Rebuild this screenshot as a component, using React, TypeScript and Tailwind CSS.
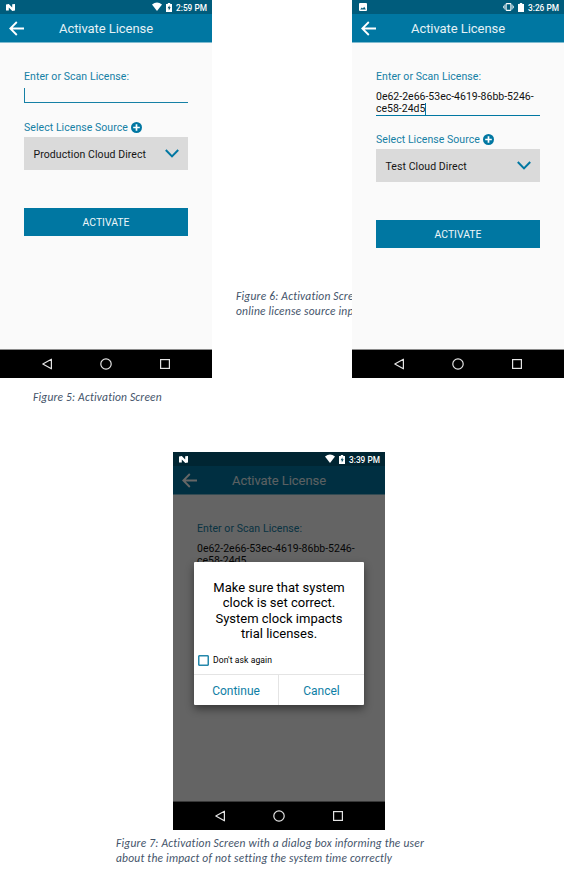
import React from "react";

type Kind = "charging" | "vibrate";

function Wifi() {
  return (
    <svg className="h-[10px] w-[10px]" viewBox="0 0 10 10">
      <path d="M0 2.4Q5-1.4 10 2.4L5 9Z" fill="#fff" />
    </svg>
  );
}

function Battery({ charging }: { charging?: boolean }) {
  return (
    <svg className="h-[9px] w-[6px]" viewBox="0 0 6 9">
      <path d="M0 1h1.8V0h2.4v1H6v8H0Z" fill="#fff" />
      {charging && <path d="M3.5 2.2 1.6 5.2h1.2v2.3l1.9-3.2H3.5Z" fill="#00495f" />}
    </svg>
  );
}

function StatusBar({ kind, time, dark }: { kind: Kind; time: string; dark?: boolean }) {
  return (
    <div className={`flex h-[14px] items-center pr-[5px] pl-[6px] text-white ${dark ? "bg-[#002532]" : "bg-[#005c7c]"}`}>
      {kind === "charging" ? (
        <svg className="h-[7px] w-[9px]" viewBox="0 0 9 7">
          <path d="M0 .5 2.8 0 6.2 3.6V.3L9 0v6.5L6.3 7 2.8 3.4v3.2H0Z" fill="#fff" />
        </svg>
      ) : (
        <svg className="ml-px h-[8px] w-[8px]" viewBox="0 0 8 8">
          <rect width="8" height="8" rx="1" fill="#fff" />
          <path d="m1.2 6.4 1.6-2 1.1 1.2 1.3-1.9 1.7 2.7Z" fill="#005c7c" />
        </svg>
      )}
      <div className="ml-auto flex items-center">
        {kind === "charging" ? (
          <>
            <Wifi />
            <span className="w-[4px]" />
            <Battery charging />
          </>
        ) : (
          <>
            <svg className="h-[8px] w-[11px]" viewBox="0 0 11 8" fill="none" stroke="#fff">
              <rect x="3.1" y=".6" width="4.8" height="6.8" rx=".6" strokeWidth="1.1" />
              <path d="M1.8 1.6v4.8M9.2 1.6v4.8M.4 2.8v2.4M10.6 2.8v2.4" strokeWidth=".8" />
            </svg>
            <span className="w-[4px]" />
            <Battery />
          </>
        )}
        <span className="ml-[4px] w-[31px] pt-px text-[8.3px] leading-[14px] font-medium whitespace-nowrap">{time}</span>
      </div>
    </div>
  );
}

function NavBar() {
  return (
    <div className="flex h-[29px] items-center justify-center border-t border-[#8c8c8c] bg-black">
      <svg className="h-[28px] w-[212px]" viewBox="0 0 212 28" fill="none" stroke="#e4e4e4" strokeWidth="1.2">
        <path d="M51.4 9.2v9.6L42.8 14Z" strokeLinejoin="round" />
        <circle cx="106" cy="14" r="5.2" />
        <rect x="160.6" y="9.6" width="8.8" height="8.8" />
      </svg>
    </div>
  );
}

interface PhoneProps {
  kind: Kind;
  time: string;
  license?: string[];
  source?: string;
  caret?: boolean;
  children?: React.ReactNode;
}

function Phone({ kind, time, license, source, caret, children }: PhoneProps) {
  return (
    <div className="relative flex h-[378px] w-[212px] shrink-0 flex-col bg-[#fafafa] font-[Roboto,sans-serif]">
      <StatusBar kind={kind} time={time} dark={Boolean(children)} />
      <div className="relative flex h-[29px] items-center justify-center border-b border-[#7fbbd0] bg-[#0077a2] pt-[2px] text-white">
        <svg className="absolute top-[7px] left-[9px] h-[15px] w-[15px]" viewBox="0 0 15 15" fill="none" stroke="#fff" strokeWidth="1.8">
          <path d="M15 7.5H1.4M7.8 1 1.3 7.5 7.8 14" />
        </svg>
        <h1 className="text-[13px] leading-[16px] tracking-[-0.06px] whitespace-nowrap text-[#e4f1f6]">Activate License</h1>
      </div>
      <div className="flex flex-1 flex-col px-[24px] pt-[27px] text-[#1580a5]">
        <p className="h-[14px] text-[10.5px] leading-[14px] tracking-[0.07px] whitespace-nowrap">Enter or Scan License:</p>
        {license ? (
          <div className="mt-[6px] mb-[-1px] flex h-[26px] flex-col border-b border-[#0077a2] pt-px text-[10.5px] leading-[12px] whitespace-nowrap text-[#111]">
            <span>{license[0]}</span>
            <span className="flex items-center">
              {license[1]}
              {caret && <i className="h-[12px] w-px bg-[#0077a2]" />}
            </span>
          </div>
        ) : (
          <div className="mt-[4px] h-[15px] border-b border-[#1580a5]">
            <i className="block h-[14px] w-px bg-[#1580a5]" />
          </div>
        )}
        {source && (
          <>
            <div className="mt-[17px] flex h-[14px] items-center gap-[3px] text-[10.5px] leading-[14px] tracking-[0.06px] whitespace-nowrap">
              <span className="pt-px">Select License Source</span>
              <svg className="h-[11px] w-[11px]" viewBox="0 0 11 11">
                <circle cx="5.5" cy="5.5" r="5.5" fill="#0077a2" />
                <path d="M5.5 2.2v6.6M2.2 5.5h6.6" stroke="#fff" strokeWidth="1.7" />
              </svg>
            </div>
            <div className="mt-[3px] flex h-[33px] items-center justify-between bg-[#dadada] pr-[9px] pl-[9.5px] text-[10.5px] tracking-[0.08px] text-[#151515]">
              <span className="pt-[2px] whitespace-nowrap">{source}</span>
              <svg className="h-[9px] w-[14px]" viewBox="0 0 14 9" fill="none" stroke="#0077a2" strokeWidth="2">
                <path d="m.8 1 6.2 6.4L13.2 1" />
              </svg>
            </div>
            <div className="mt-[38px] flex h-[28px] items-center justify-center bg-[#0077a2] pt-px text-[10.4px] text-[#edf6f9]">ACTIVATE</div>
          </>
        )}
      </div>
      <NavBar />
      {children}
    </div>
  );
}

function Dialog() {
  return (
    <>
      <div className="absolute inset-x-0 top-[14px] h-[336px] bg-black/60" />
      <div className="absolute top-[110px] left-[21px] flex h-[143px] w-[170px] flex-col rounded-[1px] bg-white text-black shadow-[0_4px_9px_rgba(0,0,0,0.45)]">
        <p className="pt-[18px] text-center text-[13px] leading-[15.4px] whitespace-nowrap">
          Make sure that system
          <br />
          clock is set correct.
          <br />
          System clock impacts
          <br />
          trial licenses.
        </p>
        <div className="mt-[12px] flex h-[14px] items-center gap-[4px] pl-[4px] text-[8.6px] tracking-[0.08px]">
          <i className="h-[11px] w-[11px] rounded-[1px] border-[1.5px] border-[#2588ab] shadow-[inset_0_0_0_0.5px_#2588ab]" />
          <span className="whitespace-nowrap">Don't ask again</span>
        </div>
        <div className="mt-auto flex h-[31px] border-t border-[#e4e4e4] text-[12px] text-[#0e7ea5]">
          <span className="flex w-[85px] items-center justify-center border-r border-[#e4e4e4] pt-px">Continue</span>
          <span className="flex w-[85px] items-center justify-center pt-px">Cancel</span>
        </div>
      </div>
    </>
  );
}

const captionStyle = "font-[Carlito,Lato,sans-serif] text-[11.5px] leading-[15px] italic whitespace-nowrap text-[#44546a]";
const key = ["0e62-2e66-53ec-4619-86bb-5246-", "ce58-24d5"];

export default function App() {
  return (
    <main className="flex h-[873px] w-[564px] flex-col overflow-hidden bg-white">
      <div className="flex h-[378px]">
        <Phone kind="charging" time="2:59 PM" source="Production Cloud Direct" />
        <p className={`${captionStyle} w-[140px] overflow-hidden pt-[289px] pl-[24px] tracking-[0.2px]`}>
          Figure 6: Activation Scre
          <br />
          online license source inp
        </p>
        <Phone kind="vibrate" time="3:26 PM" source="Test Cloud Direct" license={key} caret />
      </div>
      <p className={`${captionStyle} h-[74px] pt-[12px] pl-[33px] tracking-[0.18px]`}>Figure 5: Activation Screen</p>
      <div className="pl-[173px]">
        <Phone kind="charging" time="3:39 PM" license={key}>
          <Dialog />
        </Phone>
      </div>
      <p className={`${captionStyle} pt-[6px] pl-[116px] tracking-[0.21px]`}>
        Figure 7: Activation Screen with a dialog box informing the user
        <br />
        about the impact of not setting the system time correctly
      </p>
    </main>
  );
}
